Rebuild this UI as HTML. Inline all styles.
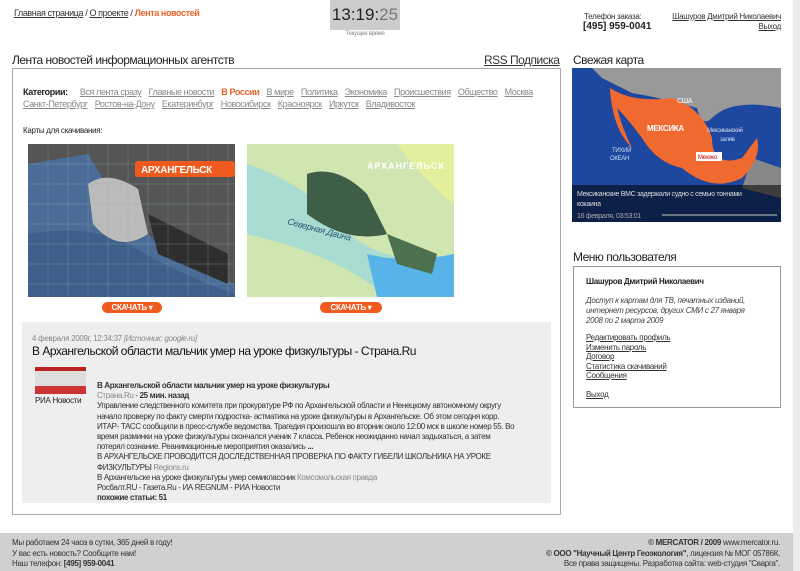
<!DOCTYPE html>
<html><head><meta charset="utf-8">
<style>
*{margin:0;padding:0;box-sizing:border-box}
body{width:800px;height:571px;overflow:hidden;background:#fff;font-family:"Liberation Sans",Arial,sans-serif;color:#222;position:relative;font-size:9px;letter-spacing:-0.3px}
.a{position:absolute;white-space:nowrap}
a{color:#333;text-decoration:underline}
.g{color:#888}
.cat a{color:#888;margin-right:5px}
.h{font-size:12px;letter-spacing:-0.5px}
</style></head><body>
<div class="a" style="left:14px;top:8px;font-size:9px;letter-spacing:-0.4px"><a href="#">Главная страница</a> / <a href="#">О проекте</a> / <span style="color:#e8622a;font-weight:bold">Лента новостей</span></div>
<div class="a" style="left:330px;top:0;width:70px;height:30px;background:#ccc;font-size:17px;text-align:center;line-height:30px;color:#222;letter-spacing:0">13:19:<span style="color:#777">25</span></div>
<div class="a" style="left:330px;top:31px;width:70px;text-align:center;font-size:6px;color:#888">Текущее время</div>
<div class="a" style="left:584px;top:12px;font-size:8px;color:#333">Телефон заказа:</div>
<div class="a" style="left:583px;top:21px;font-size:10px;font-weight:bold;letter-spacing:0">[495] 959-0041</div>
<div class="a" style="right:19px;top:12px;font-size:8px;text-align:right;line-height:10px"><a href="#">Шашуров Дмитрий Николаевич</a><br><a href="#">Выход</a></div>

<div class="a h" style="left:12px;top:53px">Лента новостей информационных агентств</div>
<div class="a h" style="left:484px;top:53px"><a href="#">RSS Подписка</a></div>
<div class="a" style="left:12px;top:68px;width:549px;height:447px;border:1px solid #aaa"></div>
<div class="a cat" style="left:23px;top:86px;font-size:9px;line-height:12px;letter-spacing:-0.4px"><b style="margin-right:10px;color:#222">Категории:</b> <a href="#">Вся лента сразу</a> <a href="#">Главные новости</a> <span style="color:#e8622a;font-weight:bold;margin-right:5px">В России</span> <a href="#">В мире</a> <a href="#">Политика</a> <a href="#">Экономика</a> <a href="#">Происшествия</a> <a href="#">Общество</a> <a href="#">Москва</a><br><a href="#">Санкт-Петербург</a> <a href="#">Ростов-на-Дону</a> <a href="#">Екатеринбург</a> <a href="#">Новосибирск</a> <a href="#">Красноярск</a> <a href="#">Иркутск</a> <a href="#">Владивосток</a></div>
<div class="a" style="left:23px;top:126px;font-size:8px">Карты для скачивания:</div>

<svg class="a" style="left:28px;top:144px" width="207" height="153" viewBox="0 0 207 153">
<rect width="207" height="153" fill="#555"/>
<path d="M0 20 L60 10 L90 60 L140 110 L207 140 L207 153 L0 153 Z" fill="#4b6fa0" opacity=".9"/>
<path d="M0 90 Q60 80 100 100 Q150 130 207 150 L207 153 L0 153Z" fill="#3f5f8a"/>
<path d="M60 40 Q80 25 110 45 L120 90 Q90 110 65 80 Z" fill="#bbb"/>
<path d="M120 70 L200 110 L200 140 L130 110Z" fill="#2e2e2e"/>
<g stroke="#8aa" stroke-width=".5" opacity=".6"><path d="M0 20H207M0 40H207M0 60H207M0 80H207M0 100H207M0 120H207M0 140H207M20 0V153M40 0V153M60 0V153M80 0V153M100 0V153M120 0V153M140 0V153M160 0V153M180 0V153M200 0V153"/></g>
<rect x="107" y="17" width="100" height="16" rx="3" fill="#f05a1e"/>
<text x="113" y="29" font-family="Liberation Sans" font-weight="bold" font-size="10" fill="#fff">АРХАНГЕЛЬСК</text>
</svg>
<svg class="a" style="left:247px;top:144px" width="207" height="153" viewBox="0 0 207 153">
<rect width="207" height="153" fill="#cfe6b0"/>
<path d="M0 20 Q60 40 90 80 Q130 120 207 120 L207 153 L140 153 Q90 110 0 90Z" fill="#a8dcd0"/>
<path d="M120 110 Q160 120 207 110 L207 153 L130 153Z" fill="#58b4e8"/>
<path d="M60 30 Q90 20 120 50 L140 90 Q100 100 60 70Z" fill="#3e5e48"/>
<path d="M140 90 L190 110 L185 130 L150 120Z" fill="#4c7050"/>
<path d="M150 0 L207 0 L207 60 Q180 40 150 0Z" fill="#e3ef9c"/>
<text x="120" y="25" font-family="Liberation Sans" font-weight="bold" font-size="9" fill="#fff" letter-spacing="1">АРХАНГЕЛЬСК</text>
<text x="40" y="80" font-family="Liberation Sans" font-style="italic" font-size="9" fill="#2a5a78" transform="rotate(15 40 80)">Северная Двина</text>
</svg>
<div class="a" style="left:102px;top:302px;width:60px;height:11px;border-radius:6px;background:#f05a1e;color:#fff;font-size:8px;font-weight:bold;text-align:center;line-height:11px">СКАЧАТЬ ▾</div>
<div class="a" style="left:320px;top:302px;width:62px;height:11px;border-radius:6px;background:#f05a1e;color:#fff;font-size:8px;font-weight:bold;text-align:center;line-height:11px">СКАЧАТЬ ▾</div>

<div class="a" style="left:22px;top:322px;width:529px;height:181px;background:#eee"></div>
<div class="a g" style="left:32px;top:334px;font-size:8px">4 февраля 2009г, 12:34:37 <i>[Источник: google.ru]</i></div>
<div class="a h" style="left:32px;top:344px;color:#111">В Архангельской области мальчик умер на уроке физкультуры - Страна.Ru</div>
<div class="a" style="left:35px;top:367px;width:51px;height:27px;background:linear-gradient(#b22 0 15%,#ddd 15% 70%,#c33 70%)"></div>
<div class="a" style="left:35px;top:396px;font-size:8px">РИА Новости</div>
<div class="a" style="left:97px;top:381px;font-size:8px;line-height:10.2px;color:#333;letter-spacing:-0.35px">
<b>В Архангельской области мальчик умер на уроке физкультуры</b><br>
<span class="g">Страна.Ru</span> - <b>25 мин. назад</b><br>
Управление следственного комитета при прокуратуре РФ по Архангельской области и Ненецкому автономному округу<br>
начало проверку по факту смерти подростка- астматика на уроке физкультуры в Архангельске. Об этом сегодня корр.<br>
ИТАР- ТАСС сообщили в пресс-службе ведомства. Трагедия произошла во вторник около 12:00 мск в школе номер 55. Во<br>
время разминки на уроке физкультуры скончался ученик 7 класса. Ребенок неожиданно начал задыхаться, а затем<br>
потерял сознание. Реанимационные мероприятия оказались <b>...</b><br>
В АРХАНГЕЛЬСКЕ ПРОВОДИТСЯ ДОСЛЕДСТВЕННАЯ ПРОВЕРКА ПО ФАКТУ ГИБЕЛИ ШКОЛЬНИКА НА УРОКЕ<br>
ФИЗКУЛЬТУРЫ <span class="g">Regions.ru</span><br>
В Архангельске на уроке физкультуры умер семиклассник <span class="g">Комсомольская правда</span><br>
Росбалт.RU - Газета.Ru - ИА REGNUM - РИА Новости<br>
<b>похожие статьи: 51</b></div>

<div class="a h" style="left:573px;top:53px">Свежая карта</div>
<svg class="a" style="left:572px;top:68px" width="209" height="154" viewBox="0 0 209 154">
<rect width="209" height="154" fill="#1e47a0"/>
<path d="M20 0 L209 0 L209 40 Q160 30 140 50 Q130 60 125 40 Q90 30 60 25 L30 10Z" fill="#999"/>
<path d="M180 90 L209 100 L209 130 L170 120Z" fill="#888"/>
<path d="M38 20 Q60 35 100 30 Q130 40 140 70 Q140 100 170 90 L185 70 Q190 90 170 110 Q140 125 110 100 Q85 95 70 70 Q55 50 45 40 Q50 60 60 80 Q40 60 38 20Z" fill="#f06a30"/>
<text x="75" y="63" font-family="Liberation Sans" font-weight="bold" font-size="8" fill="#fff">МЕКСИКА</text>
<text x="105" y="35" font-family="Liberation Sans" font-size="7" fill="#fff">США</text>
<text x="135" y="64" font-family="Liberation Sans" font-size="6" fill="#cde">Мексиканский</text>
<text x="148" y="73" font-family="Liberation Sans" font-size="6" fill="#cde">залив</text>
<text x="40" y="84" font-family="Liberation Sans" font-size="6" fill="#cde">ТИХИЙ</text>
<text x="38" y="92" font-family="Liberation Sans" font-size="6" fill="#cde">ОКЕАН</text>
<rect x="124" y="84" width="26" height="9" fill="#fff"/><text x="126" y="91" font-family="Liberation Sans" font-size="6" fill="#c00">Мехико</text>
<rect x="0" y="117" width="209" height="37" fill="#000" opacity=".55"/>
<text x="5" y="128" font-family="Liberation Sans" font-size="7" fill="#ddd">Мексиканские ВМС задержали судно с семью тоннами</text>
<text x="5" y="138" font-family="Liberation Sans" font-size="7" fill="#ddd">кокаина</text>
<text x="5" y="150" font-family="Liberation Sans" font-size="7" fill="#aaa">16 февраля, 03:53:01</text>
<line x1="90" y1="147" x2="205" y2="147" stroke="#ccc"/>
</svg>
<div class="a h" style="left:573px;top:250px">Меню пользователя</div>
<div class="a" style="left:573px;top:266px;width:208px;height:142px;border:1px solid #999"></div>
<div class="a" style="left:586px;top:277px;font-size:8px;font-weight:bold">Шашуров Дмитрий Николаевич</div>
<div class="a" style="left:586px;top:296px;font-size:8px;font-style:italic;line-height:10px;color:#444">Доступ к картам для ТВ, печатных изданий,<br>интернет ресурсов, других СМИ с 27 января<br>2008 по 2 марта 2009</div>
<div class="a" style="left:586px;top:333px;font-size:8px;line-height:9.5px"><a href="#">Редактировать профиль</a><br><a href="#">Изменить пароль</a><br><a href="#">Договор</a><br><a href="#">Статистика скачиваний</a><br><a href="#">Сообщения</a><br><br><a href="#">Выход</a></div>

<div class="a" style="left:0;top:533px;width:793px;height:38px;background:#d0d0d0"></div>
<div class="a" style="left:12px;top:538px;font-size:8px;line-height:10.5px;color:#333">Мы работаем 24 часа в сутки, 365 дней в году!<br>У вас есть новость? Сообщите нам!<br>Наш телефон: <b>[495] 959-0041</b></div>
<div class="a" style="right:20px;top:538px;font-size:8px;line-height:10.5px;color:#333;text-align:right"><b>© MERCATOR / 2009</b> www.mercator.ru.<br><b>© ООО "Научный Центр Геоэкология"</b>, лицензия № МОГ 05786К.<br>Все права защищены. Разработка сайта: web-студия "Сварга".</div>
<div class="a" style="left:793px;top:0;width:7px;height:571px;background:#ececec"></div>
</body></html>
